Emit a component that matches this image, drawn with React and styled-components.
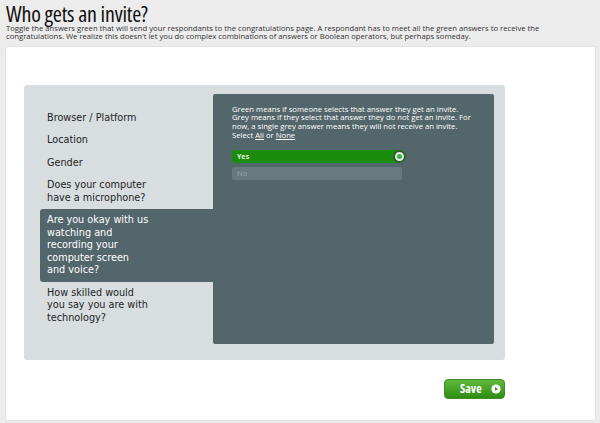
import React from "react";
import styled, { createGlobalStyle } from "styled-components";

const GlobalStyle = createGlobalStyle`
  html, body { margin: 0; padding: 0; }
  body { background: #ececec; font-family: "Open Sans", "DejaVu Sans", sans-serif; }
`;

const Page = styled.div`
  padding: 0 4px 4px 5px;
  width: 600px;
  height: 423px;
  box-sizing: border-box;
`;

const Title = styled.h1`
  margin: 0;
  padding: 1.5px 0 0 1px;
  font-family: "Open Sans", sans-serif;
  font-stretch: 75%;
  font-weight: 400;
  font-size: 22px;
  line-height: 22px;
  color: #111;
  letter-spacing: -0.2px;
`;

const Intro = styled.p`
  margin: 1.5px 0 0 1px;
  font-family: "Open Sans", sans-serif;
  font-size: 7.7px;
  line-height: 7.8px;
  color: #333;
`;

const Card = styled.div`
  margin-top: 5px;
  background: #fff;
  border: 1px solid #e2e2e2;
  border-radius: 3px;
  padding: 38px 90px 21px 18px;
  display: flex;
  flex-direction: column;
  align-items: stretch;
`;

const Panel = styled.div`
  display: flex;
  align-items: flex-start;
  background: #d8dde0;
  border-radius: 3px;
  padding: 9px 11px 16px 16px;
`;

const Menu = styled.ul`
  list-style: none;
  margin: 13px 0 0 0;
  padding: 0;
  width: 173px;
  flex: none;
`;

const Item = styled.li`
  padding: 5px 10px 5px 7px;
  font-family: "DejaVu Sans", Verdana, sans-serif;
  font-size: 9.7px;
  line-height: 12.5px;
  white-space: nowrap;
  color: ${(p) => (p.$active ? "#fff" : "#1f1f1f")};
  background: ${(p) => (p.$active ? "#53666c" : "transparent")};
  border-radius: 3px 0 0 3px;
`;

const Detail = styled.div`
  flex: 1;
  min-width: 0;
  height: 250px;
  background: #53666c;
  border-radius: 2px;
  padding: 11px 19px;
  box-sizing: border-box;
`;

const Help = styled.p`
  margin: 0;
  font-family: "Open Sans", sans-serif;
  font-size: 7.7px;
  line-height: 8.7px;
  color: #fff;
  white-space: nowrap;
`;

const Link = styled.a`
  color: #fff;
  text-decoration: underline;
`;

const Answers = styled.div`
  margin-top: 11px;
  display: flex;
  flex-direction: column;
  gap: 4px;
  width: 170px;
`;

const Answer = styled.div`
  position: relative;
  height: 13px;
  border-radius: 2px;
  padding-left: 5px;
  font-family: "Open Sans", sans-serif;
  font-size: 7.4px;
  line-height: 13px;
  font-weight: 600;
  color: ${(p) => (p.$on ? "#fff" : "#899a9e")};
  background: ${(p) => (p.$on ? "#1c8c0d" : "#687a7f")};
`;

const Knob = styled.span`
  position: absolute;
  right: -4px;
  top: 50%;
  width: 13px;
  height: 13px;
  margin-top: -6.5px;
  border-radius: 50%;
  background: #2f5f2c;
  display: flex;
  align-items: center;
  justify-content: center;
  &::after {
    content: "";
    width: 5px;
    height: 5px;
    border-radius: 50%;
    background: #35b04a;
    border: 2px solid #e8efe6;
  }
`;

const Footer = styled.div`
  display: flex;
  justify-content: flex-end;
  margin-top: 19px;
`;

const SaveButton = styled.button`
  display: flex;
  align-items: center;
  gap: 9px;
  width: 61px;
  height: 20px;
  padding: 0 0 0 15px;
  box-sizing: border-box;
  border: 1px solid #3f8d22;
  border-radius: 4px;
  background: linear-gradient(#5fb83b, #2f8d14);
  color: #fff;
  font-family: "Open Sans", sans-serif;
  font-stretch: 75%;
  font-weight: 700;
  font-size: 12px;
  cursor: pointer;
`;

const items = [
  ["Browser / Platform"],
  ["Location"],
  ["Gender"],
  ["Does your computer", "have a microphone?"],
  ["Are you okay with us", "watching and", "recording your", "computer screen", "and voice?"],
  ["How skilled would", "you say you are with", "technology?"],
];

export default function App() {
  return (
    <>
      <GlobalStyle />
      <Page>
        <Title>Who gets an invite?</Title>
        <Intro>
          Toggle the answers green that will send your respondants to the congratulations page. A respondant has to meet all the green answers to receive the congratulations. We realize this doesn't let you do complex combinations of answers or Boolean operators, but perhaps someday.
        </Intro>
        <Card>
          <Panel>
            <Menu>
              {items.map((lines, i) => (
                <Item key={lines[0]} $active={i === 4}>
                  {lines.map((l, j) => (
                    <React.Fragment key={l}>
                      {j > 0 && <br />}
                      {l}
                    </React.Fragment>
                  ))}
                </Item>
              ))}
            </Menu>
            <Detail>
              <Help>
                Green means if someone selects that answer they get an invite.
                <br />
                Grey means if they select that answer they do not get an invite. For
                <br />
                now, a single grey answer means they will not receive an invite.
                <br />
                Select <Link>All</Link> or <Link>None</Link>
              </Help>
              <Answers>
                <Answer $on>
                  Yes
                  <Knob />
                </Answer>
                <Answer>No</Answer>
              </Answers>
            </Detail>
          </Panel>
          <Footer>
            <SaveButton>
              Save
              <svg width="10" height="10" viewBox="0 0 10 10">
                <circle cx="5" cy="5" r="4.6" fill="#fff" />
                <path d="M4 3 L7 5 L4 7 Z" fill="#3c9a1e" />
              </svg>
            </SaveButton>
          </Footer>
        </Card>
      </Page>
    </>
  );
}
